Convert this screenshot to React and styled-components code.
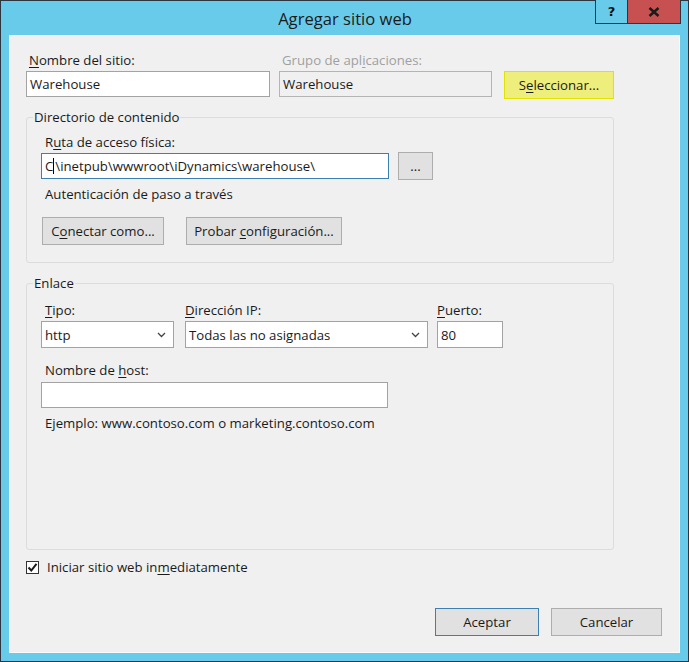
import styled, { createGlobalStyle } from "styled-components";

const GlobalStyle = createGlobalStyle`
    html, body {
        margin: 0;
        padding: 0;
        background: #ffffff;
    }
    body {
        font-family: "Open Sans", "Noto Sans", sans-serif;
        font-size: 13.2px;
        color: #1a1a1a;
    }
`;

export default function App() {
    return (
        <>
            <GlobalStyle />
            <Window>
                <TitleBar>
                    <span />
                    <Title>Agregar sitio web</Title>
                    <Controls>
                        <HelpButton>?</HelpButton>
                        <CloseButton>
                            <svg width="12" height="10" viewBox="0 0 12 10">
                                <path d="M1.5 1 L10.5 9 M10.5 1 L1.5 9" stroke="#1b1b1b" strokeWidth="2.4" />
                            </svg>
                        </CloseButton>
                    </Controls>
                </TitleBar>

                <Content>
                    <SiteRow>
                        <Field>
                            <Label><Key>N</Key>ombre del sitio:</Label>
                            <TextBox>Warehouse</TextBox>
                        </Field>
                        <Field>
                            <Label $disabled>Grupo de apl<Key>i</Key>caciones:</Label>
                            <TextBox $disabled>Warehouse</TextBox>
                        </Field>
                        <Button $highlight $width={110}>S<Key>e</Key>leccionar...</Button>
                    </SiteRow>

                    <Group $top={12} $padTop={8} $bottom={17}>
                        <Legend>Directorio de contenido</Legend>
                        <Label $indent={4}>R<Key>u</Key>ta de acceso física:</Label>
                        <PathRow>
                            <TextBox $focused $width={348}>
                                C<Caret />\inetpub\wwwroot\iDynamics\warehouse\
                            </TextBox>
                            <Button $width={35} $height={28}>...</Button>
                        </PathRow>
                        <Note $top={6}>Autenticación de paso a través</Note>
                        <ButtonRow>
                            <Button $width={122}>C<Key>o</Key>nectar como...</Button>
                            <Button $width={156}>Probar <Key>c</Key>onfiguración...</Button>
                        </ButtonRow>
                    </Group>

                    <Group $top={12} $padTop={10} $bottom={117}>
                        <Legend>Enlace</Legend>
                        <BindingRow>
                            <Field>
                                <Label $indent={4}><Key>T</Key>ipo:</Label>
                                <Select $width={133}>
                                    http
                                    <Chevron />
                                </Select>
                            </Field>
                            <Field>
                                <Label $indent={0}><Key>D</Key>irección IP:</Label>
                                <Select $width={243}>
                                    Todas las no asignadas
                                    <Chevron />
                                </Select>
                            </Field>
                            <Field>
                                <Label $indent={0}><Key>P</Key>uerto:</Label>
                                <TextBox $width={66} $height={27}>80</TextBox>
                            </Field>
                        </BindingRow>
                        <HostField>
                            <Label $indent={4}>Nombre de <Key>h</Key>ost:</Label>
                            <TextBox $width={347} />
                        </HostField>
                        <Note $top={7}>Ejemplo: www.contoso.com o marketing.contoso.com</Note>
                    </Group>

                    <CheckRow>
                        <CheckBox>
                            <svg width="11" height="11" viewBox="0 0 11 11">
                                <path d="M1.5 5.5 L4.3 8.5 L9.5 1.8" fill="none" stroke="#1b1b1b" strokeWidth="2" />
                            </svg>
                        </CheckBox>
                        <span>Iniciar sitio web in<Key>m</Key>ediatamente</span>
                    </CheckRow>

                    <Footer>
                        <Button $default $width={104}>Aceptar</Button>
                        <Button $width={111}>Cancelar</Button>
                    </Footer>
                </Content>
            </Window>
        </>
    );
}

function Chevron() {
    return (
        <ChevronIcon width="9" height="6" viewBox="0 0 9 6">
            <path d="M1 1 L4.5 4.5 L8 1" fill="none" stroke="#444" strokeWidth="1.3" />
        </ChevronIcon>
    );
}

const Window = styled.div`
    width: 689px;
    height: 662px;
    box-sizing: border-box;
    display: flex;
    flex-direction: column;
    background: #69cbea;
    border: 1px solid #2b3640;
    padding: 0 8px 8px 8px;
`;

const TitleBar = styled.div`
    height: 34px;
    flex-shrink: 0;
    display: grid;
    grid-template-columns: 1fr auto 1fr;
`;

const Title = styled.div`
    font-size: 16.6px;
    line-height: 35px;
    color: #1b1b1b;
    padding-left: 1px;
`;

const Controls = styled.div`
    justify-self: end;
    align-self: start;
    display: flex;
    margin-right: -1px;
    margin-top: -1px;
`;

const HelpButton = styled.div`
    width: 31px;
    height: 23px;
    border: 1px solid #2b3640;
    border-top: none;
    border-right: none;
    background: #69cbea;
    font-family: "DejaVu Sans", sans-serif;
    font-weight: bold;
    font-size: 13px;
    line-height: 24px;
    text-align: center;
    color: #111;
`;

const CloseButton = styled.div`
    width: 52px;
    height: 23px;
    border: 1px solid #2b3640;
    border-top: none;
    background: #c75050;
    display: flex;
    align-items: center;
    justify-content: center;
`;

const Content = styled.div`
    flex: 1;
    display: flex;
    flex-direction: column;
    background: #f0f0f0;
    border: 1px solid #fafafa;
    padding: 16px 17px 16px 16px;
`;

const Key = styled.span`
    text-decoration: underline;
    text-underline-offset: 2px;
`;

const Label = styled.div`
    line-height: 17px;
    padding-left: ${(p) => (p.$indent ?? 3)}px;
    color: ${(p) => (p.$disabled ? "#a0a0a0" : "#1a1a1a")};
    white-space: nowrap;
`;

const Field = styled.div`
    display: flex;
    flex-direction: column;
    gap: 2px;
`;

const SiteRow = styled.div`
    display: grid;
    grid-template-columns: 244px 213px auto;
    column-gap: 9px;
    align-items: end;

    & > button {
        margin-left: 3px;
        margin-bottom: -2px;
    }
`;

const TextBox = styled.div`
    box-sizing: border-box;
    width: ${(p) => (p.$width ? `${p.$width}px` : "100%")};
    height: ${(p) => p.$height || 26}px;
    display: flex;
    align-items: center;
    padding: 0 3px;
    background: ${(p) => (p.$disabled ? "#f0f0f0" : "#ffffff")};
    border: 1px solid ${(p) => (p.$focused ? "#3c7fb1" : p.$disabled ? "#b4b4b4" : "#a3a3a3")};
    color: #1a1a1a;
    white-space: nowrap;
    overflow: hidden;
`;

const Caret = styled.span`
    display: inline-block;
    width: 1px;
    height: 16px;
    background: #000;
    margin: 0 1px 0 0;
`;

const Select = styled.div`
    box-sizing: border-box;
    width: ${(p) => p.$width}px;
    height: 27px;
    display: flex;
    align-items: center;
    justify-content: space-between;
    padding: 0 7px 0 3px;
    background: #ffffff;
    border: 1px solid #a3a3a3;
    white-space: nowrap;
`;

const ChevronIcon = styled.svg`
    flex-shrink: 0;
`;

const Button = styled.button`
    box-sizing: border-box;
    width: ${(p) => p.$width}px;
    height: ${(p) => p.$height || 28}px;
    padding: 0 0 1px 0;
    font: inherit;
    color: #1a1a1a;
    background: ${(p) => (p.$highlight ? "#eeee7c" : "#e1e1e1")};
    border: 1px solid ${(p) => (p.$highlight ? "#e2e200" : p.$default ? "#3c7fb1" : "#adadad")};
    white-space: nowrap;
    cursor: default;
`;

const Group = styled.fieldset`
    margin: ${(p) => p.$top}px 0 0 0;
    width: 588px;
    box-sizing: border-box;
    border: 1px solid #dcdcdc;
    border-radius: 3px;
    padding: ${(p) => p.$padTop}px 14px ${(p) => p.$bottom}px 14px;
    display: flex;
    flex-direction: column;
    align-items: flex-start;
`;

const Legend = styled.legend`
    line-height: 17px;
    padding: 0 1px;
    margin-left: -8px;
    color: #1a1a1a;
`;

const PathRow = styled.div`
    display: flex;
    align-items: center;
    gap: 9px;
    margin-top: 1px;
`;

const Note = styled.div`
    line-height: 17px;
    padding-left: 4px;
    margin-top: ${(p) => p.$top}px;
`;

const ButtonRow = styled.div`
    display: flex;
    gap: 22px;
    margin-top: 14px;
    margin-left: 1px;
`;

const BindingRow = styled.div`
    display: flex;
    gap: 11px;

    & > div:last-child {
        margin-left: -2px;
    }
`;

const HostField = styled(Field)`
    margin-top: 14px;
    gap: 3px;
`;

const CheckRow = styled.div`
    display: flex;
    align-items: center;
    gap: 8px;
    margin-top: 9px;
    line-height: 17px;
`;

const CheckBox = styled.div`
    box-sizing: border-box;
    width: 13px;
    height: 13px;
    background: #ffffff;
    border: 1px solid #333333;
    display: flex;
    align-items: center;
    justify-content: center;
`;

const Footer = styled.div`
    margin-top: auto;
    display: flex;
    justify-content: flex-end;
    gap: 12px;
`;
